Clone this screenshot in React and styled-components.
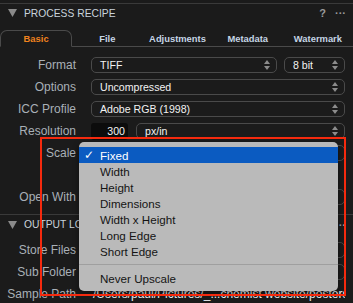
import styled, { createGlobalStyle, css } from 'styled-components';

const GlobalStyle = createGlobalStyle`
  html, body {
    margin: 0;
    padding: 0;
    background: #1b1b1b;
  }
  body {
    font-family: "Liberation Sans", Arial, sans-serif;
  }
`;

const Panel = styled.div`
  position: relative;
  width: 353px;
  height: 303px;
  overflow: hidden;
  box-sizing: border-box;
  padding-top: 3px;
  background: #1b1b1b;
`;

const SectionHeader = styled.div`
  display: flex;
  align-items: center;
  gap: 7px;
  height: ${(p) => p.height || 18}px;
  padding: 0 7px 0 8px;
  border-top: 1px solid #3a3a3a;
`;

const Title = styled.div`
  font-size: 10.3px;
  color: #c9d3dc;
  white-space: nowrap;
`;

const HeaderTools = styled.div`
  display: flex;
  align-items: center;
  gap: 9px;
  margin-left: auto;
  color: #9a9a9a;
  font-size: 11px;
  font-weight: bold;
`;

const TabBar = styled.div`
  display: flex;
  margin-top: 8px;
`;

const Tab = styled.div`
  flex: 1;
  height: 17px;
  box-sizing: border-box;
  display: flex;
  align-items: center;
  justify-content: center;
  font-size: 9.4px;
  font-weight: bold;
  color: #c6d6e6;
  border-bottom: 1px solid #4a4a4a;

  ${(p) =>
    p.active &&
    css`
      color: #f0821e;
      border: 1px solid #4a4a4a;
      border-bottom-color: transparent;
      border-radius: 7px 7px 0 0;
    `}
`;

const Form = styled.div`
  display: grid;
  grid-template-columns: 76px 1fr;
  column-gap: 15px;
  row-gap: 6px;
  padding: ${(p) => p.top || 10}px 8px 0 0;
`;

const Label = styled.div`
  text-align: right;
  font-size: 12px;
  line-height: 16px;
  color: #a9b0b7;
  white-space: nowrap;
`;

const Controls = styled.div`
  display: flex;
  gap: ${(p) => p.gap || 7}px;
  height: 16px;
`;

const Select = styled.div`
  flex: ${(p) => (p.width ? 'none' : 1)};
  width: ${(p) => (p.width ? `${p.width}px` : 'auto')};
  height: 16px;
  box-sizing: border-box;
  display: flex;
  align-items: center;
  justify-content: space-between;
  padding: 0 6px 0 8px;
  border: 1px solid #4a4a4a;
  border-radius: 5px;
  font-size: 10.6px;
  color: #f2f2f2;
  white-space: nowrap;
  overflow: hidden;
`;

const NumberField = styled.div`
  width: 37px;
  height: 17px;
  box-sizing: border-box;
  padding-right: 3px;
  text-align: right;
  line-height: 17px;
  font-size: 10.6px;
  color: #f2f2f2;
  background: #0c0c0c;
  border-radius: 3px;
`;

const PathText = styled.div`
  padding-left: 2px;
  font-size: 12px;
  line-height: 16px;
  color: #eef2f6;
  white-space: nowrap;
  overflow: hidden;
`;

const Divider = styled.div`
  margin-top: 9px;
`;

const Menu = styled.div`
  position: absolute;
  left: 79px;
  top: 142px;
  width: 259px;
  padding: 5px 0;
  background: #bababa;
  border-radius: 5px;
  box-shadow: 0 2px 6px rgba(0, 0, 0, 0.45);
  z-index: 2;
`;

const MenuItem = styled.div`
  position: relative;
  height: 16px;
  display: flex;
  align-items: center;
  padding-left: 21px;
  font-size: 11.6px;
  color: #141414;

  ${(p) =>
    p.selected &&
    css`
      background: #0b5bc1;
      color: #ffffff;
    `}
`;

const Check = styled.span`
  position: absolute;
  left: 5px;
  font-family: "DejaVu Sans", sans-serif;
  font-size: 12px;
  font-weight: bold;
`;

const MenuSeparator = styled.div`
  height: 1px;
  margin: 5px 0 5px;
  background: #9f9f9f;
`;

const Highlight = styled.div`
  position: absolute;
  left: 40px;
  top: 137px;
  width: 306px;
  height: 159px;
  box-sizing: border-box;
  border: 2px solid #f52a0e;
  z-index: 3;
  pointer-events: none;
`;

const Disclosure = () => (
  <svg width="9" height="8" viewBox="0 0 9 8">
    <path d="M0 0 H9 L4.5 8 Z" fill="#8a8a8a" />
  </svg>
);

const Stepper = () => (
  <svg width="6" height="10" viewBox="0 0 6 10">
    <path d="M3 0 L6 4 H0 Z M0 6 H6 L3 10 Z" fill="#8c8c8c" />
  </svg>
);

const RightArrow = () => (
  <svg width="6" height="9" viewBox="0 0 6 9">
    <path d="M0 0 L6 4.5 L0 9 Z" fill="#9a9a9a" />
  </svg>
);

const scaleOptions = ['Fixed', 'Width', 'Height', 'Dimensions', 'Width x Height', 'Long Edge', 'Short Edge'];

export default function App() {
  return (
    <>
      <GlobalStyle />
      <Panel>
        <SectionHeader>
          <Disclosure />
          <Title>PROCESS RECIPE</Title>
          <HeaderTools>
            <span>?</span>
            <span>···</span>
          </HeaderTools>
        </SectionHeader>

        <TabBar>
          <Tab active>Basic</Tab>
          <Tab>File</Tab>
          <Tab>Adjustments</Tab>
          <Tab>Metadata</Tab>
          <Tab>Watermark</Tab>
        </TabBar>

        <Form>
          <Label>Format</Label>
          <Controls>
            <Select>TIFF<Stepper /></Select>
            <Select width={61}>8 bit<Stepper /></Select>
          </Controls>

          <Label>Options</Label>
          <Controls>
            <Select>Uncompressed<Stepper /></Select>
          </Controls>

          <Label>ICC Profile</Label>
          <Controls>
            <Select>Adobe RGB (1998)<Stepper /></Select>
          </Controls>

          <Label>Resolution</Label>
          <Controls gap={8}>
            <NumberField>300</NumberField>
            <Select>px/in<Stepper /></Select>
          </Controls>

          <Label>Scale</Label>
          <Controls>
            <Select>Fixed<Stepper /></Select>
          </Controls>

          <Label />
          <Controls>
            <Select width={50}>100 %</Select>
          </Controls>

          <Label>Open With</Label>
          <Controls>
            <Select>None<Stepper /></Select>
          </Controls>
        </Form>

        <Divider>
          <SectionHeader height={19}>
            <Disclosure />
            <Title>OUTPUT LOCATION</Title>
            <HeaderTools>
              <span>···</span>
            </HeaderTools>
          </SectionHeader>
        </Divider>

        <Form top={8}>
          <Label>Store Files</Label>
          <Controls>
            <Select>Output Folder<RightArrow /></Select>
          </Controls>

          <Label>Sub Folder</Label>
          <Controls>
            <Select>posters</Select>
          </Controls>

          <Label>Sample Path</Label>
          <PathText>/Users/paul/Pictures/_...chemist website/posters</PathText>
        </Form>

        <Menu>
          {scaleOptions.map((option, i) => (
            <MenuItem key={option} selected={i === 0}>
              {i === 0 && <Check>✓</Check>}
              {option}
            </MenuItem>
          ))}
          <MenuSeparator />
          <MenuItem>Never Upscale</MenuItem>
        </Menu>

        <Highlight />
      </Panel>
    </>
  );
}
